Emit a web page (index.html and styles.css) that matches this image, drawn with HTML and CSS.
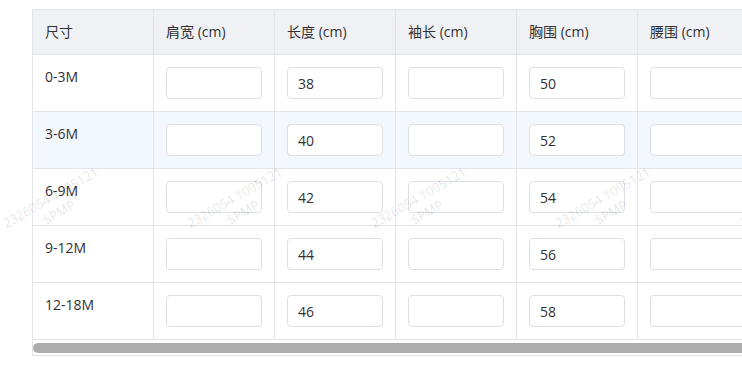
FILE: index.html
```html
<!DOCTYPE html>
<html lang="zh-CN">
<head>
<meta charset="utf-8">
<title>尺码表</title>
<link rel="stylesheet" href="styles.css">
</head>
<body>
<div class="size-table-wrap">
  <div class="size-table-body">
    <table class="size-table">
      <thead>
        <tr>
          <th>尺寸</th>
          <th>肩宽 (cm)</th>
          <th>长度 (cm)</th>
          <th>袖长 (cm)</th>
          <th>胸围 (cm)</th>
          <th>腰围 (cm)</th>
          <th>臀围 (cm)</th>
        </tr>
      </thead>
      <tbody>
        <tr>
          <td>0-3M</td>
          <td><input class="cell-input" type="text" value=""></td>
          <td><input class="cell-input" type="text" value="38"></td>
          <td><input class="cell-input" type="text" value=""></td>
          <td><input class="cell-input" type="text" value="50"></td>
          <td><input class="cell-input" type="text" value=""></td>
          <td><input class="cell-input" type="text" value=""></td>
        </tr>
        <tr class="is-hover">
          <td>3-6M</td>
          <td><input class="cell-input" type="text" value=""></td>
          <td><input class="cell-input" type="text" value="40"></td>
          <td><input class="cell-input" type="text" value=""></td>
          <td><input class="cell-input" type="text" value="52"></td>
          <td><input class="cell-input" type="text" value=""></td>
          <td><input class="cell-input" type="text" value=""></td>
        </tr>
        <tr>
          <td>6-9M</td>
          <td><input class="cell-input" type="text" value=""></td>
          <td><input class="cell-input" type="text" value="42"></td>
          <td><input class="cell-input" type="text" value=""></td>
          <td><input class="cell-input" type="text" value="54"></td>
          <td><input class="cell-input" type="text" value=""></td>
          <td><input class="cell-input" type="text" value=""></td>
        </tr>
        <tr>
          <td>9-12M</td>
          <td><input class="cell-input" type="text" value=""></td>
          <td><input class="cell-input" type="text" value="44"></td>
          <td><input class="cell-input" type="text" value=""></td>
          <td><input class="cell-input" type="text" value="56"></td>
          <td><input class="cell-input" type="text" value=""></td>
          <td><input class="cell-input" type="text" value=""></td>
        </tr>
        <tr>
          <td>12-18M</td>
          <td><input class="cell-input" type="text" value=""></td>
          <td><input class="cell-input" type="text" value="46"></td>
          <td><input class="cell-input" type="text" value=""></td>
          <td><input class="cell-input" type="text" value="58"></td>
          <td><input class="cell-input" type="text" value=""></td>
          <td><input class="cell-input" type="text" value=""></td>
        </tr>
      </tbody>
    </table>
  </div>
  <div class="h-scrollbar">
    <div class="h-scrollbar-thumb"></div>
  </div>
</div>

<!-- user watermark layer -->
<div class="watermark" aria-hidden="true">
  <div class="wm-row wm-row-faint wm-row-top">
    <span class="wm">2326054 1095121<br>SPMP</span>
    <span class="wm">2326054 1095121<br>SPMP</span>
    <span class="wm">2326054 1095121<br>SPMP</span>
    <span class="wm">2326054 1095121<br>SPMP</span>
    <span class="wm">2326054 1095121<br>SPMP</span>
  </div>
  <div class="wm-row wm-row-mid">
    <span class="wm">2326054 1095121<br>SPMP</span>
    <span class="wm">2326054 1095121<br>SPMP</span>
    <span class="wm">2326054 1095121<br>SPMP</span>
    <span class="wm">2326054 1095121<br>SPMP</span>
    <span class="wm">2326054 1095121<br>SPMP</span>
  </div>
  <div class="wm-row wm-row-faint wm-row-bottom">
    <span class="wm">2326054 1095121<br>SPMP</span>
    <span class="wm">2326054 1095121<br>SPMP</span>
    <span class="wm">2326054 1095121<br>SPMP</span>
    <span class="wm">2326054 1095121<br>SPMP</span>
    <span class="wm">2326054 1095121<br>SPMP</span>
  </div>
</div>
</body>
</html>
```

FILE: styles.css
```css
html, body {
  margin: 0;
  background: #ffffff;
  overflow: hidden;
}

body {
  padding: 9px 0 0 32px;
  font-family: "Open Sans", "Noto Sans CJK SC", sans-serif;
  font-size: 14px;
  color: #303133;
  position: relative;
  height: 385px;
  box-sizing: border-box;
}

/* scroll container around the table */
.size-table-wrap {
  width: 800px;
  border: 1px solid #e2e4ea;
  overflow: hidden;
}

.size-table-body {
  overflow: hidden;
}

/* horizontal scrollbar below the rows */
.h-scrollbar {
  height: 15px;
  padding: 3px 0 2px;
  box-sizing: border-box;
  background: #ffffff;
}

.h-scrollbar-thumb {
  width: 756px;
  height: 10px;
  border-radius: 5px;
  background: #adadad;
}

.size-table {
  border-collapse: separate;
  border-spacing: 0;
  table-layout: fixed;
  width: 847px;
}

.size-table th,
.size-table td {
  width: 96px;
  padding: 12px;
  border-right: 1px solid #e2e4ea;
  border-bottom: 1px solid #e2e4ea;
  text-align: left;
  vertical-align: top;
  line-height: 20px;
  font-weight: 400;
}

.size-table th {
  background: #f0f1f5;
  color: #303133;
}

.size-table tr.is-hover td {
  background: #f3f7fe;
}

.cell-input {
  display: block;
  width: 96px;
  height: 32px;
  box-sizing: border-box;
  border: 1px solid #dcdfe6;
  border-radius: 4px;
  padding: 0 10px;
  font-family: "Open Sans", "Noto Sans CJK SC", sans-serif;
  font-size: 14px;
  color: #303133;
  background: #ffffff;
  outline: none;
}

/* watermark */
.watermark {
  position: absolute;
  inset: 0;
  pointer-events: none;
  overflow: hidden;
}

.wm-row {
  position: absolute;
  left: -37px;
  display: flex;
}

.wm-row-mid { top: 188px; }
.wm-row-top { top: 10px; left: -60px; }
.wm-row-bottom { top: 355px; left: -50px; }

.wm {
  width: 184px;
  flex: none;
  text-align: center;
  font-family: "Open Sans", sans-serif;
  font-size: 13px;
  line-height: 17px;
  color: rgba(0, 0, 0, 0.12);
  transform: rotate(-30deg);
  white-space: nowrap;
}

.wm-row-faint .wm {
  color: rgba(0, 0, 0, 0.025);
}
```
